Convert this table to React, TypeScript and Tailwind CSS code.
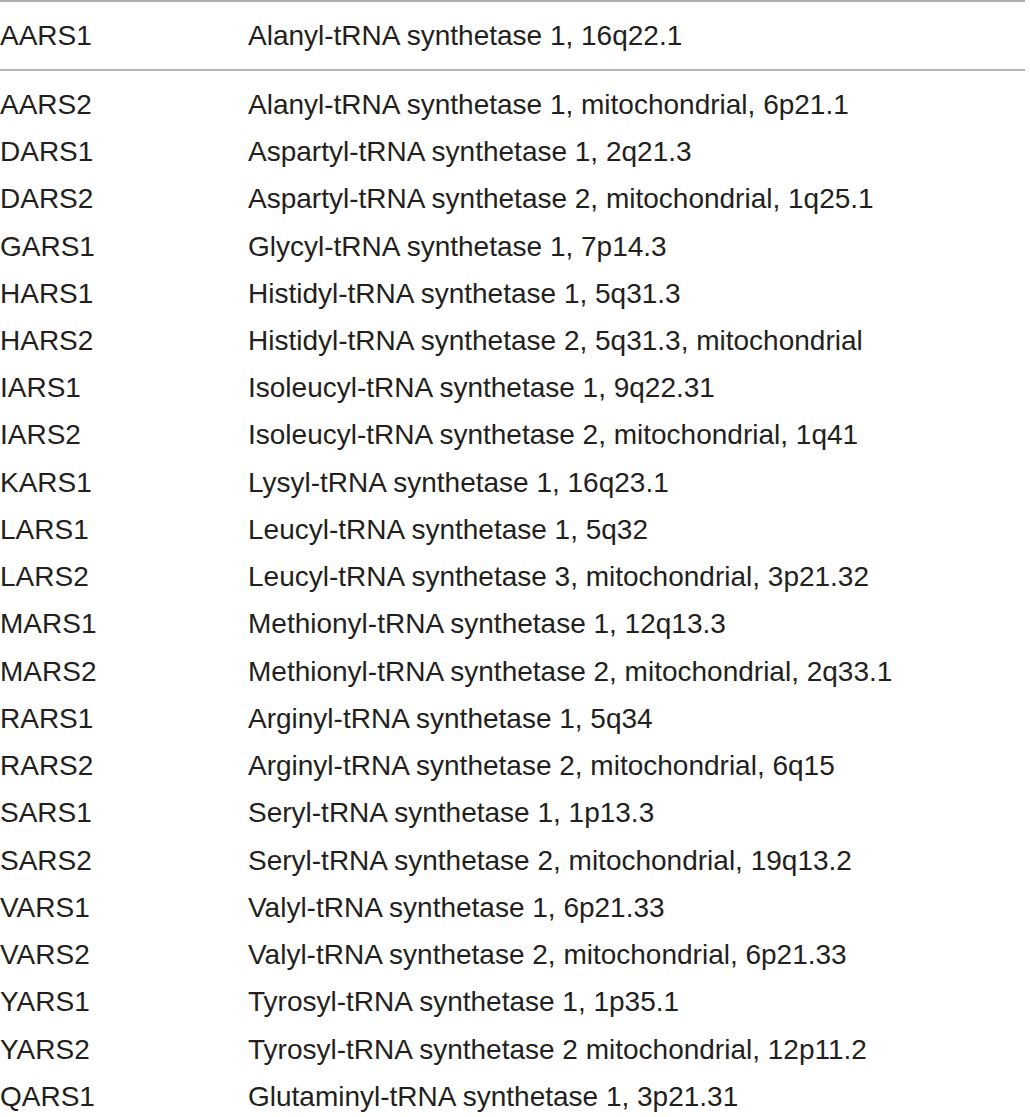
const rows: [string, string][] = [
  ['AARS2', 'Alanyl-tRNA synthetase 1, mitochondrial, 6p21.1'],
  ['DARS1', 'Aspartyl-tRNA synthetase 1, 2q21.3'],
  ['DARS2', 'Aspartyl-tRNA synthetase 2, mitochondrial, 1q25.1'],
  ['GARS1', 'Glycyl-tRNA synthetase 1, 7p14.3'],
  ['HARS1', 'Histidyl-tRNA synthetase 1, 5q31.3'],
  ['HARS2', 'Histidyl-tRNA synthetase 2, 5q31.3, mitochondrial'],
  ['IARS1', 'Isoleucyl-tRNA synthetase 1, 9q22.31'],
  ['IARS2', 'Isoleucyl-tRNA synthetase 2, mitochondrial, 1q41'],
  ['KARS1', 'Lysyl-tRNA synthetase 1, 16q23.1'],
  ['LARS1', 'Leucyl-tRNA synthetase 1, 5q32'],
  ['LARS2', 'Leucyl-tRNA synthetase 3, mitochondrial, 3p21.32'],
  ['MARS1', 'Methionyl-tRNA synthetase 1, 12q13.3'],
  ['MARS2', 'Methionyl-tRNA synthetase 2, mitochondrial, 2q33.1'],
  ['RARS1', 'Arginyl-tRNA synthetase 1, 5q34'],
  ['RARS2', 'Arginyl-tRNA synthetase 2, mitochondrial, 6q15'],
  ['SARS1', 'Seryl-tRNA synthetase 1, 1p13.3'],
  ['SARS2', 'Seryl-tRNA synthetase 2, mitochondrial, 19q13.2'],
  ['VARS1', 'Valyl-tRNA synthetase 1, 6p21.33'],
  ['VARS2', 'Valyl-tRNA synthetase 2, mitochondrial, 6p21.33'],
  ['YARS1', 'Tyrosyl-tRNA synthetase 1, 1p35.1'],
  ['YARS2', 'Tyrosyl-tRNA synthetase 2 mitochondrial, 12p11.2'],
  ['QARS1', 'Glutaminyl-tRNA synthetase 1, 3p21.31'],
]

function Row({ gene, desc }: { gene: string; desc: string }) {
  return (
    <div className="flex h-[47.24px] items-center whitespace-nowrap">
      <div className="w-[248px] shrink-0">{gene}</div>
      <div>{desc}</div>
    </div>
  )
}

export default function App() {
  return (
    <div className="w-[1030px] h-[1117px] overflow-hidden bg-white text-[28px] leading-none text-[#231f20] font-['Liberation_Sans',Arial,sans-serif]">
      <div className="h-[2px] w-[1025px] bg-[#adadad]" />
      <div className="pt-[10px] pb-[10px]">
        <Row gene="AARS1" desc="Alanyl-tRNA synthetase 1, 16q22.1" />
      </div>
      <div className="h-[2px] w-[1025px] bg-[#b5b5b5]" />
      <div className="pt-[10px]">
        {rows.map(([gene, desc]) => (
          <Row key={gene} gene={gene} desc={desc} />
        ))}
      </div>
    </div>
  )
}
